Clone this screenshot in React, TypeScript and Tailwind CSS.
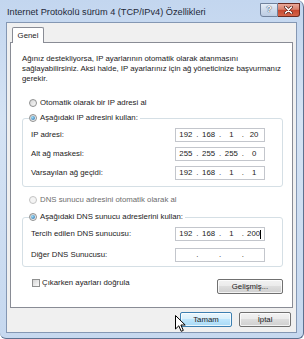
import type { ReactNode } from "react";

function Radio({ checked = false, disabled = false }: { checked?: boolean; disabled?: boolean }) {
  return (
    <span
      className={
        "w-[8px] h-[8px] rounded-full border flex items-center justify-center shrink-0 " +
        (disabled
          ? "border-[#c4c4c4] bg-[#f4f4f4]"
          : "border-[#8e8f8f] bg-[linear-gradient(135deg,#d4d4d4,#fbfbfb)]")
      }
    >
      {checked && (
        <span className="w-[4px] h-[4px] rounded-full bg-[radial-gradient(circle_at_35%_35%,#9fe0f8,#1d63a8)]" />
      )}
    </span>
  );
}

function IpBox({ parts, caret = false }: { parts: string[]; caret?: boolean }) {
  return (
    <div className="w-[90px] h-[14px] bg-white border border-[#c3c6cc] flex items-center text-[7.8px]">
      {parts.map((p, i) => (
        <div key={i} className="contents">
          <span className="flex-1 text-center">
            {p}
            {caret && i === 3 && <span className="inline-block w-px h-[9px] bg-black align-middle" />}
          </span>
          {i < 3 && <span className="w-[3px] text-center">.</span>}
        </div>
      ))}
    </div>
  );
}

function Row({ label, parts, caret, className }: { label: string; parts: string[]; caret?: boolean; className: string }) {
  return (
    <div className={"h-[14px] flex items-center justify-between pl-[8px] pr-[17px] " + className}>
      <span>{label}</span>
      <IpBox parts={parts} caret={caret} />
    </div>
  );
}

function Btn({ children, primary = false, className = "" }: { children: ReactNode; primary?: boolean; className?: string }) {
  return (
    <div
      className={
        "h-[15px] rounded-[2px] border flex items-center justify-center shadow-[inset_0_0_0_1px_rgba(255,255,255,0.75)] " +
        (primary
          ? "border-[#3c7fb1] bg-[linear-gradient(#eaf6fd_0%,#d9f0fc_45%,#bee6fd_50%,#a7d9f5_100%)] "
          : "border-[#707070] bg-[linear-gradient(#f2f2f2_0%,#ebebeb_45%,#dddddd_50%,#cfcfcf_100%)] ") +
        className
      }
    >
      {children}
    </div>
  );
}

export default function App() {
  return (
    <div className="relative w-[304px] h-[339px] overflow-hidden flex flex-col font-['Liberation_Sans',Arial,sans-serif] text-[7.8px] text-[#1b1b1b] bg-[linear-gradient(180deg,#c3d6ef,#d5e3f4_35%,#c6d8ef)] rounded-tr-[7px] rounded-b-[6px] border-r border-b border-[#5d7190]">
      {/* title bar */}
      <div className="h-[22px] shrink-0 flex items-start pl-[7px] pr-[3px]">
        <span className="flex-1 pt-[7px] text-[9.2px] leading-[11px] text-[#1e2838]">
          Internet Protokolü sürüm 4 (TCP/IPv4) Özellikleri
        </span>
        <div className="flex mt-[3px]">
          <div className="w-[18px] h-[14px] rounded-bl-[3px] border border-[#71829c] bg-[linear-gradient(#e6eef8,#cfdbeb_50%,#bccce2)] flex items-center justify-center text-[9px] font-bold text-white [text-shadow:0_0_1px_#34455e,0_0_1px_#34455e]">
            ?
          </div>
          <div className="w-[22px] h-[14px] rounded-br-[3px] border border-l-0 border-[#6a2a22] bg-[linear-gradient(#eaa899,#d8806c_45%,#c6472f_50%,#d4654a)] flex items-center justify-center">
            <svg width="9" height="8" viewBox="0 0 9 8">
              <path d="M1.5 1 L7.5 7 M7.5 1 L1.5 7" stroke="#5a1e16" strokeWidth="3" strokeLinecap="round" />
              <path d="M1.5 1 L7.5 7 M7.5 1 L1.5 7" stroke="#ffffff" strokeWidth="1.6" strokeLinecap="round" />
            </svg>
          </div>
        </div>
      </div>

      {/* client */}
      <div className="ml-[6px] mr-[6px] mb-[5px] flex-1 bg-[#f0f0f0] border border-[#8497b3] flex flex-col">
        <div className="ml-[5px] mt-[4px] -mb-px relative z-10 w-[32px] h-[16px] bg-white border border-b-0 border-[#898c95] rounded-t-[2px] flex items-center justify-center">
          Genel
        </div>
        <div className="ml-[3px] w-[283px] h-[266px] bg-white border border-[#898c95] flex flex-col">
          <p className="mt-[11px] ml-[11px] leading-[10px] whitespace-nowrap">
            Ağınız destekliyorsa, IP ayarlarının otomatik olarak atanmasını
            <br />
            sağlayabilirsiniz. Aksi halde, IP ayarlarınız için ağ yöneticinize başvurmanız
            <br />
            gerekir.
          </p>

          <div className="mt-[14px] ml-[18px] h-[10px] flex items-center gap-[3px]">
            <Radio />
            <span>Otomatik olarak bir IP adresi al</span>
          </div>

          <div className="mt-[10px] ml-[11px] w-[261px] border border-[#d5dfe5] rounded-[3px] pb-[6px] flex flex-col">
            <div className="-mt-[6px] ml-[6px] h-[10px] w-fit bg-white pr-[2px] flex items-center gap-[3px]">
              <Radio checked />
              <span>Aşağıdaki IP adresini kullan:</span>
            </div>
            <Row className="mt-[5px]" label="IP adresi:" parts={["192", "168", "1", "20"]} />
            <Row className="mt-[5px]" label="Alt ağ maskesi:" parts={["255", "255", "255", "0"]} />
            <Row className="mt-[5px]" label="Varsayılan ağ geçidi:" parts={["192", "168", "1", "1"]} />
          </div>

          <div className="mt-[8px] ml-[18px] h-[10px] flex items-center gap-[3px] text-[#6d6d6d]">
            <Radio disabled />
            <span>DNS sunucu adresini otomatik olarak al</span>
          </div>

          <div className="mt-[12px] ml-[11px] w-[261px] border border-[#d5dfe5] rounded-[3px] pb-[4px] flex flex-col">
            <div className="-mt-[6px] ml-[6px] h-[10px] w-fit bg-white pr-[2px] flex items-center gap-[3px]">
              <Radio checked />
              <span>Aşağıdaki DNS sunucu adreslerini kullan:</span>
            </div>
            <Row className="mt-[5px]" label="Tercih edilen DNS sunucusu:" parts={["192", "168", "1", "200"]} caret />
            <Row className="mt-[7px]" label="Diğer DNS Sunucusu:" parts={["", "", "", ""]} />
          </div>

          <div className="mt-[11px] flex items-start">
            <div className="ml-[21px] h-[9px] flex items-center gap-[2px]">
              <span className="w-[8px] h-[8px] border border-[#8e8f8f] bg-[linear-gradient(135deg,#d4d4d4,#fbfbfb)] shrink-0" />
              <span>Çıkarken ayarları doğrula</span>
            </div>
            <Btn className="ml-auto mr-[9px] mt-[1px] w-[66px]">Gelişmiş...</Btn>
          </div>
        </div>

        <div className="mt-[4px] pr-[5px] flex justify-end gap-[7px]">
          <Btn primary className="w-[52px]">Tamam</Btn>
          <Btn className="w-[52px]">İptal</Btn>
        </div>
      </div>

      {/* mouse pointer over the OK button */}
      <svg className="absolute left-[175px] top-[315px]" width="12" height="18" viewBox="0 0 12 18">
        <path d="M0.5 0.5 L0.5 14 L3.8 10.8 L6.2 16.3 L8.3 15.4 L5.9 10 L10.2 10 Z" fill="#ffffff" stroke="#000000" strokeWidth="1" strokeLinejoin="round" />
      </svg>
    </div>
  );
}
